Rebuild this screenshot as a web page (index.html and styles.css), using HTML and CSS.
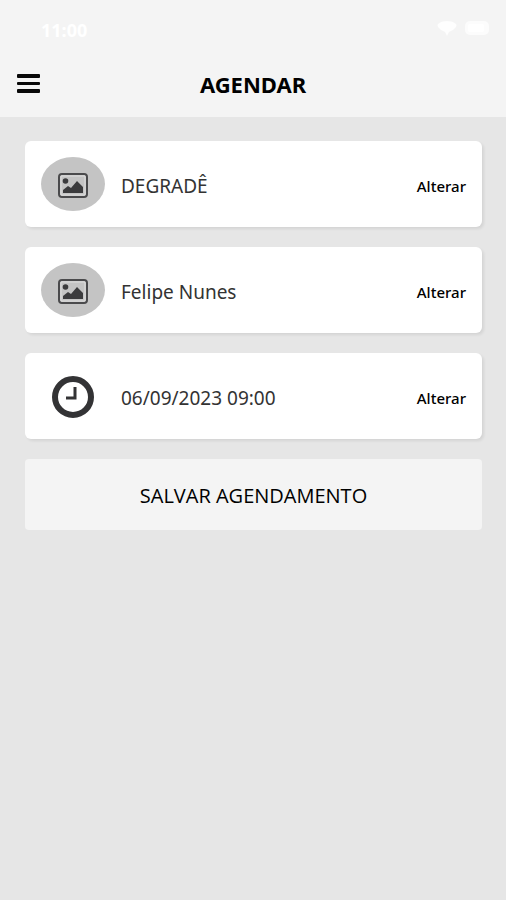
FILE: index.html
```html
<!DOCTYPE html>
<html lang="pt-BR">
<head>
<meta charset="utf-8">
<meta name="viewport" content="width=device-width, initial-scale=1">
<title>Agendar</title>
<link rel="stylesheet" href="styles.css">
</head>
<body>
<header class="header">
  <div class="status">
    <span class="time">11:00</span>
    <div class="indicators">
      <svg width="20" height="15" viewBox="0 0 20 15" fill="currentColor" aria-hidden="true"><path d="M10 0C6 0 3 1 1 3Q0 4 1 6L4 9L8 11L10 15L12 11L16 9L19 6Q20 4 19 3C17 1 14 0 10 0Z" opacity=".85"/></svg>
      <svg width="25" height="14" viewBox="0 0 25 14" aria-hidden="true"><rect width="24" height="14" rx="5" fill="currentColor" opacity=".7"/><rect x="3" y="3" width="16" height="8" rx="2" fill="currentColor"/></svg>
    </div>
  </div>
  <div class="toolbar">
    <button class="menu" type="button" aria-label="Menu">
      <svg width="24" height="20" viewBox="0 0 24 20" aria-hidden="true"><g fill="#080808"><rect x="1" y="0" width="23" height="4" rx="1"/><rect x="1" y="8" width="23" height="3" rx="1"/><rect x="1" y="15" width="23" height="4" rx="1"/></g></svg>
    </button>
    <h1 class="title">AGENDAR</h1>
  </div>
</header>
<main class="content">
  <section class="card">
    <span class="media avatar">
      <svg width="30" height="25" viewBox="0 0 30 25" aria-hidden="true"><rect x="1" y="1" width="28" height="23" rx="3" fill="none" stroke="#4a4a4c" stroke-width="2"/><path d="M3 3H27V22H3Z" fill="none" stroke="#dedede"/><circle cx="7.500" cy="8" r="2.800" fill="#3b3b3d"/><path d="M5 20V17L10 13L13 15L19 8L25 14V20Z" fill="#3b3b3d"/></svg>
    </span>
    <span class="label">DEGRADÊ</span>
    <button class="change" type="button">Alterar</button>
  </section>
  <section class="card">
    <span class="media avatar">
      <svg width="30" height="25" viewBox="0 0 30 25" aria-hidden="true"><rect x="1" y="1" width="28" height="23" rx="3" fill="none" stroke="#4a4a4c" stroke-width="2"/><path d="M3 3H27V22H3Z" fill="none" stroke="#dedede"/><circle cx="7.500" cy="8" r="2.800" fill="#3b3b3d"/><path d="M5 20V17L10 13L13 15L19 8L25 14V20Z" fill="#3b3b3d"/></svg>
    </span>
    <span class="label">Felipe Nunes</span>
    <button class="change" type="button">Alterar</button>
  </section>
  <section class="card">
    <span class="media">
      <svg width="42" height="42" viewBox="0 0 42 42" fill="none" stroke="#333335" aria-hidden="true"><circle cx="21" cy="21" r="18" stroke-width="6"/><path d="M23 11V22H14" stroke-width="3"/></svg>
    </span>
    <span class="label">06/09/2023 09:00</span>
    <button class="change" type="button">Alterar</button>
  </section>
  <button class="save" type="button">SALVAR AGENDAMENTO</button>
</main>
</body>
</html>
```
FILE: styles.css
```css
* {
  box-sizing: border-box;
}

body {
  margin: 0;
  min-height: 100vh;
  background: #e6e6e6;
  color: #000;
  font-family: "Noto Sans", "Open Sans", sans-serif;
}

button {
  padding: 0;
  border: 0;
  background: none;
  color: inherit;
  font: inherit;
  cursor: pointer;
}

svg {
  display: block;
}

.header {
  background: #f4f4f4;
  padding: 20px 16px 17px;
}

.status {
  display: flex;
  justify-content: space-between;
  padding-left: 25px;
  color: #fff;
  height: 48px;
}

.time {
  font-size: 18px;
  line-height: 20px;
  font-weight: 700;
}

.indicators {
  display: flex;
  align-items: center;
  gap: 8px;
  height: 16px;
}

.toolbar {
  display: grid;
  grid-template-columns: 24px 1fr 24px;
  align-items: center;
}

.title {
  margin: 0;
  font-size: 22px;
  line-height: 32px;
  font-weight: 700;
  text-align: center;
}

.content {
  display: flex;
  flex-direction: column;
  gap: 20px;
  padding: 24px 24px 24px 25px;
}

.card {
  display: flex;
  align-items: center;
  padding: 16px;
  border-radius: 6px;
  background: #fff;
  box-shadow: 2px 2px 3px rgba(0, 0, 0, 0.08);
}

.media {
  display: flex;
  align-items: center;
  justify-content: center;
  width: 64px;
  height: 54px;
  padding-top: 2px;
  margin-right: 16px;
}

.avatar {
  border-radius: 50%;
  background: #c4c4c4;
}

.label,
.change {
  padding-top: 4px;
}

.label {
  flex: 1;
  color: #333;
  font-size: 19px;
  line-height: 28px;
}

.change {
  font-size: 15px;
  font-weight: 500;
  line-height: 20px;
}

.save {
  height: 71px;
  padding-top: 2px;
  border-radius: 4px;
  background: #f4f4f4;
  font-family: "Open Sans", "Noto Sans", sans-serif;
  font-size: 20px;
  line-height: 28px;
}
```
